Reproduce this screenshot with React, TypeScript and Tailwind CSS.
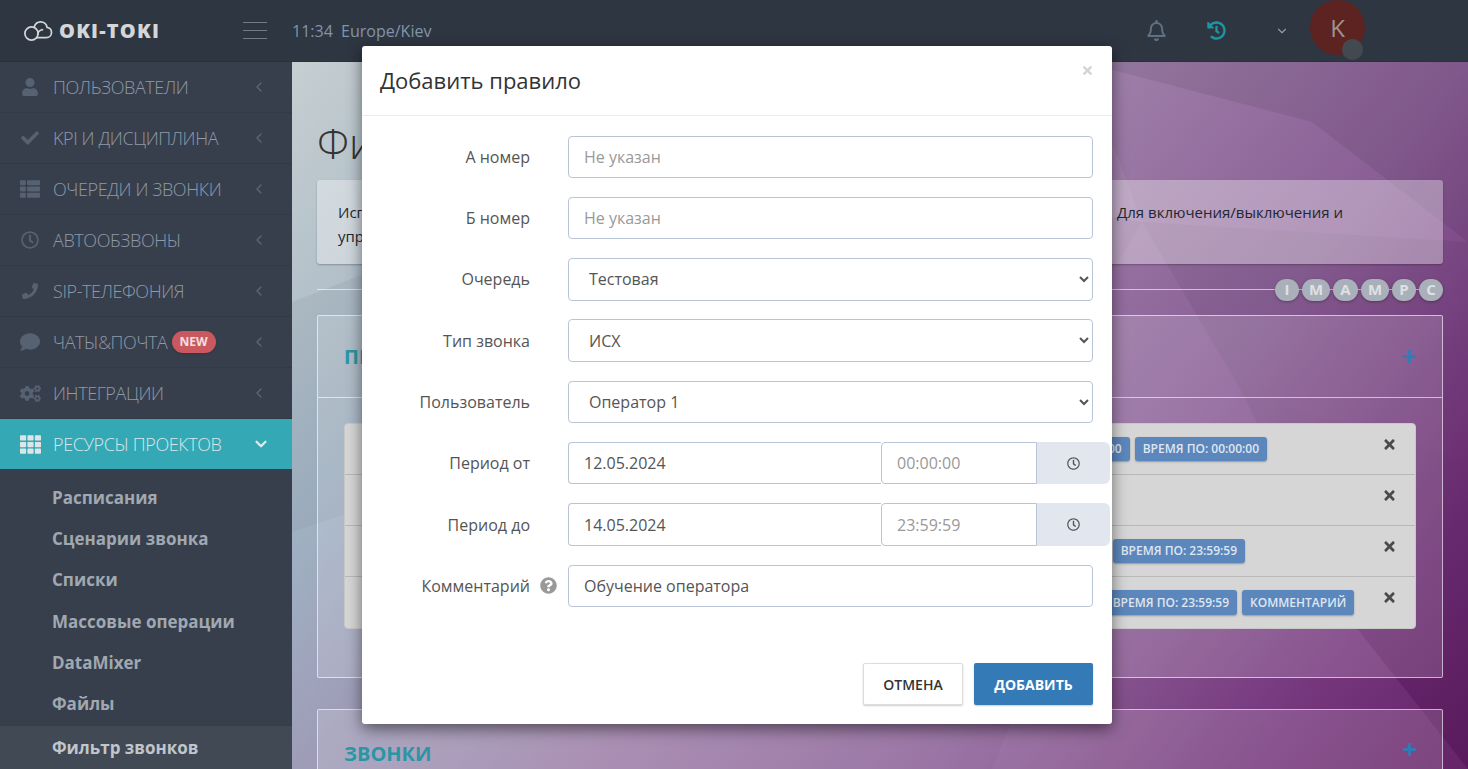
import React from 'react';
import {
  FaUser, FaCheck, FaThList, FaRegClock, FaPhoneAlt, FaComment, FaCogs, FaTh,
  FaTimes, FaPlus, FaQuestionCircle, FaRegBell, FaHistory,
} from 'react-icons/fa';
import { FiChevronLeft, FiChevronDown } from 'react-icons/fi';

const font = "font-['Open_Sans',sans-serif]";

const menu = [
  { label: 'ПОЛЬЗОВАТЕЛИ', icon: <FaUser size={18} /> },
  { label: 'KPI И ДИСЦИПЛИНА', icon: <FaCheck size={18} /> },
  { label: 'ОЧЕРЕДИ И ЗВОНКИ', icon: <FaThList size={20} /> },
  { label: 'АВТООБЗВОНЫ', icon: <FaRegClock size={18} /> },
  { label: 'SIP-ТЕЛЕФОНИЯ', icon: <FaPhoneAlt size={16} className="-scale-x-100" /> },
  { label: 'ЧАТЫ&ПОЧТА', icon: <FaComment size={20} />, isNew: true },
  { label: 'ИНТЕГРАЦИИ', icon: <FaCogs size={21} /> },
];

const subMenu = ['Расписания', 'Сценарии звонка', 'Списки', 'Массовые операции', 'DataMixer', 'Файлы'];

function Logo() {
  return (
    <svg width="30" height="22" viewBox="0 0 30 22" fill="none" stroke="#d4d6d8" strokeWidth="1.7">
      <circle cx="8.5" cy="13.5" r="6.6" />
      <path d="M11 7.5c1-3.4 3.6-5.6 6.6-5.6 3.4 0 6 2.4 6.5 5.6 2.6.3 4.4 2.4 4.4 5 0 3-2.3 5.2-5.2 5.2H13" />
      <path d="M14.6 15c.2-3 2.6-5.400 5.600-5.400" />
    </svg>
  );
}

function Header() {
  return (
    <header className="h-[62px] shrink-0 flex items-center bg-[#2e3642] border-b border-[#2a313c]">
      <div className="w-[243px] pl-[23px] flex items-center gap-[6px]">
        <Logo />
        <span className="text-[#d4d6d8] text-[20px] font-extrabold tracking-[1.2px]">OKI-TOKI</span>
      </div>
      <div className="w-[24px] flex flex-col gap-[7px]">
        <div className="h-px bg-[#737b85]" />
        <div className="h-px bg-[#737b85]" />
        <div className="h-px bg-[#737b85]" />
      </div>
      <div className="ml-[25px] text-[16px] text-[#8095aa]">11:34&nbsp; Europe/Kiev</div>
      <div className="ml-auto flex items-center">
        <FaRegBell size={21} className="text-[#5f7082]" />
        <FaHistory size={19} className="ml-[40px] text-[#1f95a2]" />
        <FiChevronDown size={14} className="ml-[49px] text-[#8c9cad]" />
        <div className="relative ml-[21px] mr-[103px] -mt-[6px] w-[55px] h-[55px] rounded-full bg-[#5c2320] flex items-center justify-center text-[24px] text-[#a09391]">
          K
          <div className="absolute left-[32px] top-[39px] w-[21px] h-[21px] rounded-full bg-[#434a4f]" />
        </div>
      </div>
    </header>
  );
}

function Sidebar() {
  return (
    <aside className="w-[292px] shrink-0 bg-[#373f4c] flex flex-col">
      {menu.map((m) => (
        <div key={m.label} className="h-[51px] shrink-0 flex items-center border-b border-[#323a46] pl-[19px] pr-[25px]">
          <span className="w-[22px] flex justify-center text-[#566271]">{m.icon}</span>
          <span className="ml-[12px] text-[18px] font-light tracking-[-0.4px] text-[#8e99a9]">{m.label}</span>
          {m.isNew && (
            <span className="ml-[4px] px-[8px] h-[22px] flex items-center rounded-full bg-[#c9595f] text-white/80 text-[12px] font-bold shadow">NEW</span>
          )}
          <FiChevronLeft size={16} className="ml-auto text-[#5a6675]" />
        </div>
      ))}
      <div className="h-[50px] shrink-0 flex items-center pl-[19px] pr-[22px] bg-[#34a8b5]">
        <span className="w-[22px] flex justify-center text-[#dfe4e6]"><FaTh size={21} /></span>
        <span className="ml-[12px] text-[18px] font-light tracking-[-0.4px] text-[#d9e6e8]">РЕСУРСЫ ПРОЕКТОВ</span>
        <FiChevronDown size={18} className="ml-auto text-[#e4eaec]" strokeWidth={3} />
      </div>
      <div className="pt-[8px] flex flex-col">
        {subMenu.map((s) => (
          <div key={s} className="h-[41.3px] shrink-0 flex items-center pl-[52px] text-[17px] font-bold text-[#a0a8b1]">{s}</div>
        ))}
        <div className="h-[43px] mt-[1px] shrink-0 flex items-center pl-[52px] text-[17px] font-bold text-[#c0c6cc] bg-[#414955]">Фильтр звонков</div>
      </div>
    </aside>
  );
}

function Background() {
  return (
    <svg className="absolute inset-0 w-full h-full" viewBox="0 0 1176 707" preserveAspectRatio="none">
      <polygon points="0,0 250,0 180,170 0,240" fill="#fff" opacity="0.05" />
      <polygon points="250,0 560,0 470,150 180,170" fill="#fff" opacity="0.03" />
      <polygon points="560,0 790,0 850,160 640,125" fill="#fff" opacity="0.05" />
      <polygon points="790,0 1176,0 1176,180 1020,60" fill="#000" opacity="0.07" />
      <polygon points="850,160 1176,180 1176,400 950,330" fill="#000" opacity="0.05" />
      <polygon points="640,125 850,160 760,310 540,250" fill="#000" opacity="0.04" />
      <polygon points="0,240 180,170 300,370 0,470" fill="#000" opacity="0.03" />
      <polygon points="950,330 1176,400 1176,707 1060,560" fill="#000" opacity="0.06" />
      <polygon points="760,560 1060,560 1176,707 700,707" fill="#fff" opacity="0.04" />
    </svg>
  );
}

function Badge({ children }: { children: React.ReactNode }) {
  return (
    <span className="h-[24.500px] px-[8px] flex items-center rounded-[3px] bg-[#5c87bd] text-[#dfe6f0] text-[12px] font-semibold whitespace-nowrap shadow-[0_1px_2px_rgba(0,0,0,0.3)]">
      {children}
    </span>
  );
}

function RuleRow({ pad, badges, last }: { pad: number; badges: string[]; last?: boolean }) {
  return (
    <div className={`relative h-[51px] flex items-center ${last ? '' : 'border-b border-[#b9b9b9]'}`}>
      <div className="flex gap-[5px]" style={{ marginLeft: pad }}>
        {badges.map((b) => <Badge key={b}>{b}</Badge>)}
      </div>
      <FaTimes size={15} className="absolute right-[18px] top-[13px] text-[#4a4a4a]" />
    </div>
  );
}

function Content() {
  return (
    <main className="relative flex-1 overflow-hidden px-[25px] pt-[52px] bg-[linear-gradient(128deg,#c3cdcf_0%,#9fb0c2_22%,#9c7ba6_50%,#8a5f96_68%,#6f2d76_88%,#5f1b62_100%)]">
      <Background />
      <div className="relative">
        <h1 className="text-[42px] leading-[58px] font-light text-[#333]">Фильтр звонков</h1>
        <div className="mt-[8px] h-[84px] px-[21px] pt-[20px] rounded-[3px] bg-white/35 shadow-[0_1px_2px_rgba(0,0,0,0.25)] text-[15px] leading-[24px] text-[#1f2730]">
          <div className="flex">
            <span className="w-[779px] overflow-hidden whitespace-nowrap">Используйте правила, чтобы фильтровать звонки</span>
            <span>Для включения/выключения и</span>
          </div>
          <div>управления</div>
        </div>
        <div className="relative h-[51px] flex items-center justify-end">
          <div className="absolute left-0 right-0 top-[25px] h-px bg-white/60" />
          <div className="relative flex gap-[3px] text-[15px] font-bold text-[#dde1e5]">
            {['I', 'M', 'A', 'M', 'P', 'C'].map((c, i) => (
              <span key={i} className={`h-[22px] rounded-full bg-[#a9b0b9] flex items-center justify-center shadow-[0_1px_3px_rgba(0,0,0,0.3)] ${c === 'M' ? 'w-[28px]' : c === 'A' ? 'w-[25px]' : 'w-[24px]'} ${c === 'I' ? 'w-[20px]' : ''}`}>{c}</span>
            ))}
          </div>
        </div>
        <section className="h-[363px] border border-white/60 rounded-[2px] bg-white/15">
          <div className="h-[82px] flex items-center justify-between pl-[26px] pr-[25px] border-b border-white/60">
            <span className="text-[20px] font-bold text-[#2a96a5]">ПРАВИЛА</span>
            <FaPlus size={15} className="text-[#337ab7]" />
          </div>
          <div className="mx-[26px] mt-[25px] rounded-[4px] bg-[#d6d6d6] border border-[#c8c8c8]">
            <RuleRow pad={663} badges={['ВРЕМЯ С: 00:00:00', 'ВРЕМЯ ПО: 00:00:00']} />
            <RuleRow pad={663} badges={[]} />
            <RuleRow pad={641} badges={['ВРЕМЯ С: 00:00:00', 'ВРЕМЯ ПО: 23:59:59']} />
            <RuleRow pad={633} badges={['ВРЕМЯ С: 00:00:00', 'ВРЕМЯ ПО: 23:59:59', 'КОММЕНТАРИЙ']} last />
          </div>
        </section>
        <section className="mt-[31px] h-[100px] border border-white/60 rounded-[2px] bg-white/15 flex items-start justify-between pl-[26px] pr-[25px] pt-[29px]">
          <span className="text-[20px] font-bold text-[#2a96a5]">ЗВОНКИ</span>
          <FaPlus size={15} className="text-[#337ab7] mt-[3px]" />
        </section>
      </div>
    </main>
  );
}

const inputCls = 'h-[42.5px] min-w-0 border border-[#b9c4d6] bg-white text-[16px] text-[#555] placeholder:text-[#999] outline-none';

function FormRow({ label, help, children }: { label: string; help?: boolean; children: React.ReactNode }) {
  return (
    <div className="flex items-center h-[42.5px]">
      <label className="w-[168px] shrink-0 text-right text-[16px] text-[#555]">{label}</label>
      <span className="w-[38px] shrink-0 pl-[10px]">
        {help && <FaQuestionCircle size={17} className="text-[#999]" />}
      </span>
      {children}
    </div>
  );
}

function SelectField({ value }: { value: string }) {
  return (
    <select defaultValue={value} className={`${inputCls} w-[525px] rounded-[4px] px-[16px]`} style={{ appearance: 'auto' }}>
      <option>{value}</option>
    </select>
  );
}

function PeriodField({ date, time }: { date: string; time: string }) {
  return (
    <div className="flex w-[542px] shrink-0">
      <input readOnly value={date} className={`${inputCls} w-[313px] rounded-l-[4px] border-r-0 px-[15px]`} />
      <input readOnly value={time} className={`${inputCls} w-[156px] rounded-l-[4px] px-[15px] text-[#999]`} />
      <span className="w-[73px] h-[42.5px] flex items-center justify-center rounded-r-[6px] bg-[#e2e6ee] text-[#555]">
        <FaRegClock size={13} />
      </span>
    </div>
  );
}

function Modal() {
  return (
    <div className="absolute left-[362px] top-[46px] w-[750px] h-[678px] rounded-[3px] bg-white shadow-[0_5px_15px_rgba(0,0,0,0.5)]">
      <div className="relative h-[70px] border-b border-[#e9ecef] pl-[18px] flex items-center">
        <h4 className="text-[22px] text-[#333]">Добавить правило</h4>
        <FaTimes size={13} className="absolute right-[18px] top-[18px] text-[#d4d4d4]" />
      </div>
      <div className="pt-[19.500px] flex flex-col gap-[18.8px]">
        <FormRow label="А номер">
          <input placeholder="Не указан" className={`${inputCls} w-[525px] rounded-[4px] px-[15px]`} />
        </FormRow>
        <FormRow label="Б номер">
          <input placeholder="Не указан" className={`${inputCls} w-[525px] rounded-[4px] px-[15px]`} />
        </FormRow>
        <FormRow label="Очередь"><SelectField value="Тестовая" /></FormRow>
        <FormRow label="Тип звонка"><SelectField value="ИСХ" /></FormRow>
        <FormRow label="Пользователь"><SelectField value="Оператор 1" /></FormRow>
        <FormRow label="Период от"><PeriodField date="12.05.2024" time="00:00:00" /></FormRow>
        <FormRow label="Период до"><PeriodField date="14.05.2024" time="23:59:59" /></FormRow>
        <FormRow label="Комментарий" help>
          <input readOnly value="Обучение оператора" className={`${inputCls} w-[525px] rounded-[4px] px-[15px] border-[#8c9db8]`} />
        </FormRow>
      </div>
      <div className="mt-[56px] pr-[19px] flex justify-end gap-[11px]">
        <button className="w-[100px] h-[42px] bg-white border border-[#ddd] rounded-[2px] text-[14px] font-semibold text-[#333] shadow-[0_1px_2px_rgba(0,0,0,0.2)]">ОТМЕНА</button>
        <button className="w-[119px] h-[42px] bg-[#337ab7] rounded-[2px] text-[14px] font-bold text-white shadow-[0_1px_2px_rgba(0,0,0,0.2)]">ДОБАВИТЬ</button>
      </div>
    </div>
  );
}

export default function App() {
  return (
    <div className={`relative h-[769px] w-[1468px] overflow-hidden flex flex-col ${font}`}>
      <Header />
      <div className="flex flex-1 min-h-0">
        <Sidebar />
        <Content />
      </div>
      <Modal />
    </div>
  );
}
